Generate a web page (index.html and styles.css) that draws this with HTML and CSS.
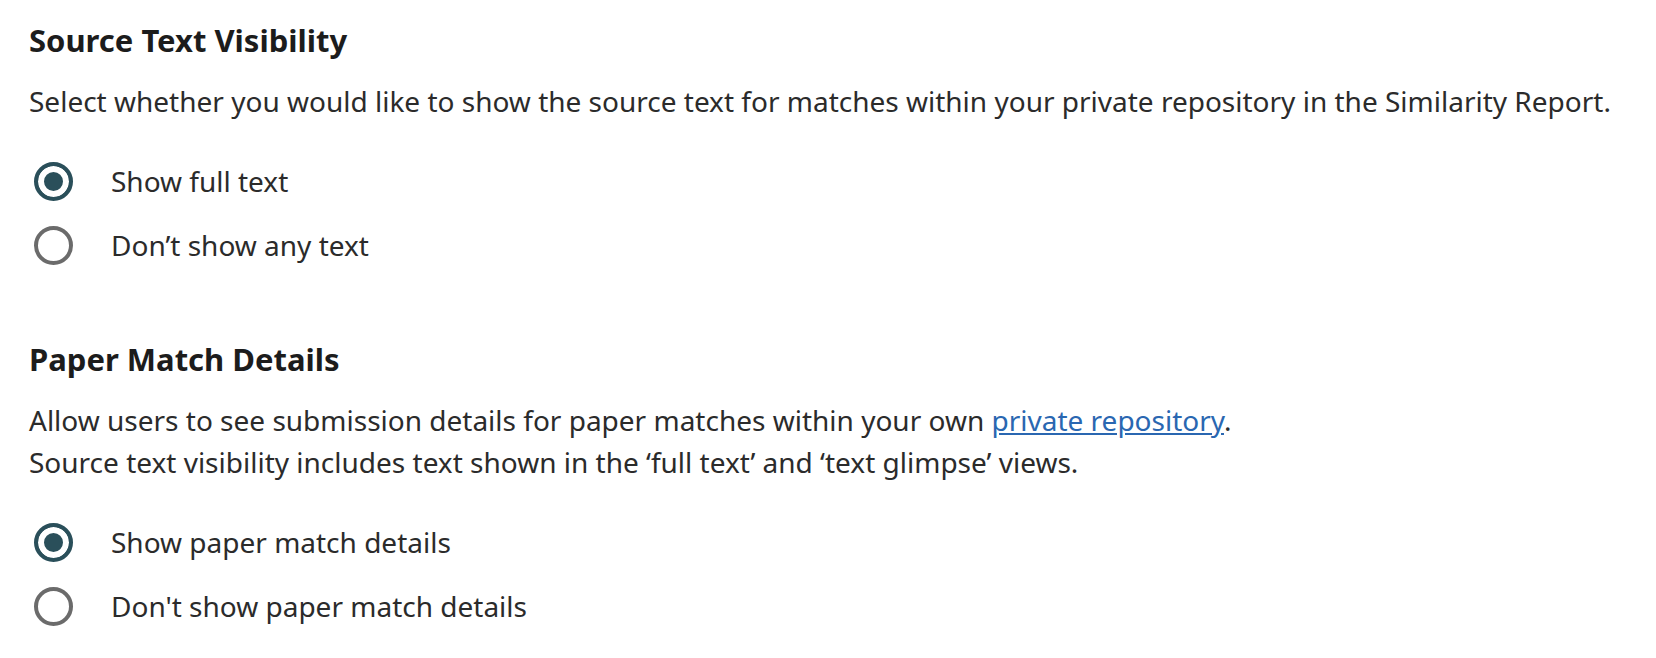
FILE: index.html
```html
<!DOCTYPE html>
<html lang="en">
<head>
    <meta charset="UTF-8">
    <meta name="viewport" content="width=device-width, initial-scale=1.0">
    <title>Repository Settings</title>
    <link rel="stylesheet" href="styles.css">
</head>
<body>

    <section class="setting">
        <h2>Source Text Visibility</h2>
        <p class="desc">Select whether you would like to show the source text for matches within your private repository in the Similarity Report.</p>
        <div class="options">
            <label class="option">
                <input type="radio" name="sourceText" checked>
                <span>Show full text</span>
            </label>
            <label class="option">
                <input type="radio" name="sourceText">
                <span>Don’t show any text</span>
            </label>
        </div>
    </section>

    <section class="setting">
        <h2>Paper Match Details</h2>
        <p class="desc">Allow users to see submission details for paper matches within your own <a href="#">private repository</a>.<br>
        Source text visibility includes text shown in the ‘full text’ and ‘text glimpse’ views.</p>
        <div class="options">
            <label class="option">
                <input type="radio" name="paperMatch" checked>
                <span>Show paper match details</span>
            </label>
            <label class="option">
                <input type="radio" name="paperMatch">
                <span>Don't show paper match details</span>
            </label>
        </div>
    </section>

</body>
</html>
```

FILE: styles.css
```css
body {
    margin: 0;
    padding: 20px 29px 0;
    font-family: "Noto Sans", "Open Sans", sans-serif;
    color: #2b2b2b;
    background-color: white;
}

.setting + .setting {
    margin-top: 74px;
}

h2 {
    margin: 0;
    font-size: 31px;
    line-height: 40px;
    font-weight: 700;
    color: #1c1c1c;
}

.desc {
    margin: 20px 0 0;
    font-size: 28px;
    line-height: 42px;
}

.desc a {
    color: #2a67b1;
}

.options {
    margin-top: 40px;
    display: flex;
    flex-direction: column;
    gap: 25px;
}

.option {
    display: flex;
    align-items: center;
    gap: 38px;
    font-size: 28px;
    line-height: 39px;
    cursor: pointer;
}

.option input {
    appearance: none;
    margin: 0 0 0 5px;
    width: 39px;
    height: 39px;
    border: 4px solid #6b6b6b;
    border-radius: 50%;
    background-color: white;
    cursor: pointer;
}

.option input:checked {
    border-color: #2a4f5a;
    background-color: #2a4f5a;
    box-shadow: inset 0 0 0 6px white;
}
```
